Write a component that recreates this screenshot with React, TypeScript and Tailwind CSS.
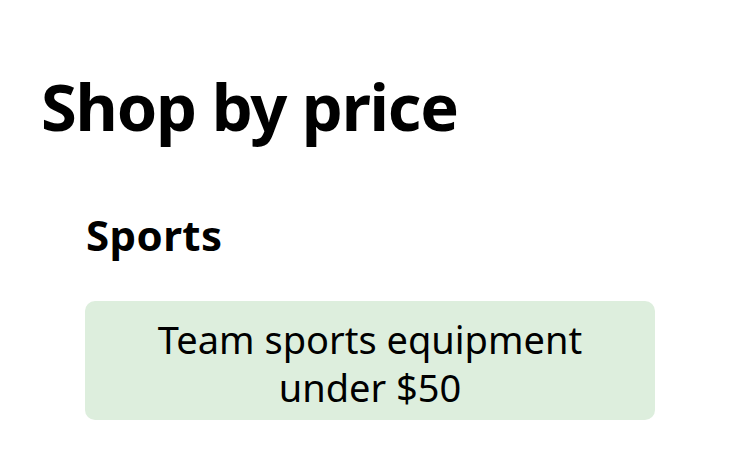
import React from 'react';

const font = { fontFamily: '"Noto Sans", "Liberation Sans", sans-serif' };

const App: React.FC = () => {
  return (
    <div className="w-[750px] h-[464px] bg-white text-black overflow-hidden" style={font}>
      <div className="pl-[41px] pt-[66px]">
        <h1 className="text-[65px] leading-[80px] font-bold tracking-[-1.2px]">Shop by price</h1>
      </div>
      <div className="pl-[85px] pr-[95px] pt-[64px]">
        <h2 className="text-[42px] leading-[50px] font-bold pl-[1px] tracking-[0.4px]">Sports</h2>
        <div className="mt-[41px] rounded-[10px] bg-[#ddeedd] h-[119px] flex items-center justify-center text-center pt-[4px]">
          <p className="text-[38px] leading-[48px] w-[460px]">Team sports equipment under $50</p>
        </div>
      </div>
    </div>
  );
};

export default App;
